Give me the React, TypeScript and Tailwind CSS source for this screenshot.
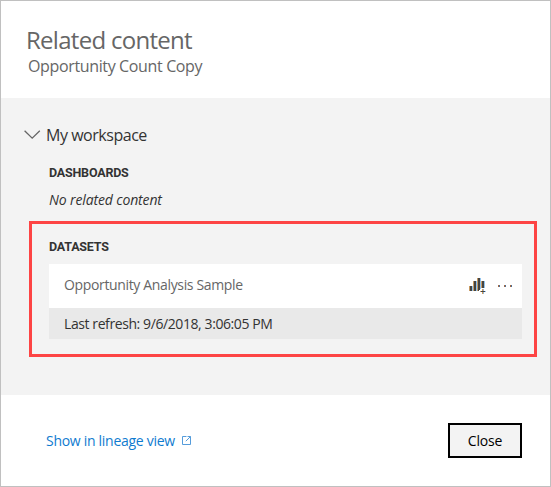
const bars = [
  { x: 1, y: 8, h: 5 },
  { x: 5, y: 3, h: 10 },
  { x: 9, y: 0, h: 13 },
  { x: 13, y: 3, h: 7 },
];

function ChartPlusIcon() {
  return (
    <svg className="block" width="18" height="17" viewBox="0 0 18 17" shapeRendering="crispEdges">
      {bars.map((b) => (
        <g key={b.x}>
          <rect x={b.x} y={b.y} width="1" height={b.h} fill="#c79a62" />
          <rect x={b.x + 1} y={b.y} width="2" height={b.h} fill="#444" />
          <rect x={b.x + 3} y={b.y} width="1" height={b.h} fill="#8fc4f0" />
        </g>
      ))}
      <rect x="11" y="11" width="7" height="6" fill="#fff" />
      <rect x="11" y="11" width="1" height="1" fill="#444" />
      <rect x="14" y="11" width="1" height="5" fill="#d69d55" />
      <rect x="15" y="11" width="1" height="5" fill="#8fb4dc" />
      <rect x="13" y="13" width="4" height="1" fill="#444" />
      <rect x="12" y="13" width="1" height="1" fill="#c79a62" />
      <rect x="17" y="13" width="1" height="1" fill="#8fc4f0" />
    </svg>
  );
}

function MoreIcon() {
  return (
    <svg className="block" width="15" height="2" viewBox="0 0 15 2" shapeRendering="crispEdges">
      {[0, 6, 12].map((x) => (
        <g key={x}>
          <rect x={x} y="0" width="1" height="2" fill="#a8693f" />
          <rect x={x + 1} y="0" width="1" height="2" fill="#4f7096" />
        </g>
      ))}
    </svg>
  );
}

function ExternalIcon() {
  return (
    <svg className="block" width="10" height="9" viewBox="0 0 10 9" fill="none" stroke="#559cdb" strokeWidth="1">
      <path d="M4.5 .5H.5v8h8V.5H5.5" />
      <path d="M8.5 .5L3.8 5.2" />
    </svg>
  );
}

export default function App() {
  return (
    <div className="flex h-[487px] w-[551px] flex-col border border-[#c0c0c0] bg-white font-['Open_Sans','Noto_Sans',sans-serif] text-sm text-[#333]">
      <header className="h-[97px] pt-[23px] text-[#666]">
        <h1 className="pl-[25px] text-[24px] leading-8 tracking-[-0.71px]">Related content</h1>
        <p className="pl-[27px] text-[16px] leading-5 tracking-[-0.36px]">Opportunity Count Copy</p>
      </header>

      <main className="h-[297px] bg-[#f3f3f3] pt-[27px]">
        <div className="flex h-5 items-center pl-[23px]">
          <svg className="block" width="17" height="10" viewBox="0 0 17 10" fill="none" stroke="#666" strokeWidth="1.3">
            <path d="M.6 .8L8.2 8.2L15.8 .8" />
          </svg>
          <span className="ml-[5px] text-[16px] leading-5 tracking-[-0.47px]">My workspace</span>
        </div>
        <h2 className="mt-5 pl-12 font-['Roboto',sans-serif] text-[12.5px] leading-4 font-bold tracking-[-0.2px]">DASHBOARDS</h2>
        <p className="mt-[9px] pl-12 leading-5 tracking-[-0.13px] italic">No related content</p>

        <section className="mt-[11px] ml-7 h-[136px] w-[508px] border-[3px] border-[#fd4444] pt-[15px] pr-3 pl-[17px]">
          <h2 className="font-['Roboto',sans-serif] text-[12.5px] leading-4 font-bold tracking-[-0.2px]">DATASETS</h2>
          <div className="mt-[9px]">
            <div className="flex h-[44px] justify-between bg-white pr-[9px] pl-[15px]">
              <span className="leading-[41px] tracking-[-0.35px] text-[#666]">Opportunity Analysis Sample</span>
              <div className="flex items-center">
                <ChartPlusIcon />
                <span className="ml-3">
                  <MoreIcon />
                </span>
              </div>
            </div>
            <div className="h-[31px] bg-[#e9e9e9] pl-[15px] leading-[31px] tracking-[-0.41px]">
              Last refresh: 9/6/2018, 3:06:05 PM
            </div>
          </div>
        </section>
      </main>

      <footer className="flex justify-between pt-7 pr-7 pl-[45px]">
        <a className="flex h-[35px] items-center text-[#0f7bcf]">
          <span className="leading-5 tracking-[-0.29px]">Show in lineage view</span>
          <span className="ml-[7px]">
            <ExternalIcon />
          </span>
        </a>
        <button className="h-[35px] w-[74px] border-2 border-black bg-[#f3f3f3] leading-[31px] tracking-[-0.2px] text-black">
          Close
        </button>
      </footer>
    </div>
  );
}
